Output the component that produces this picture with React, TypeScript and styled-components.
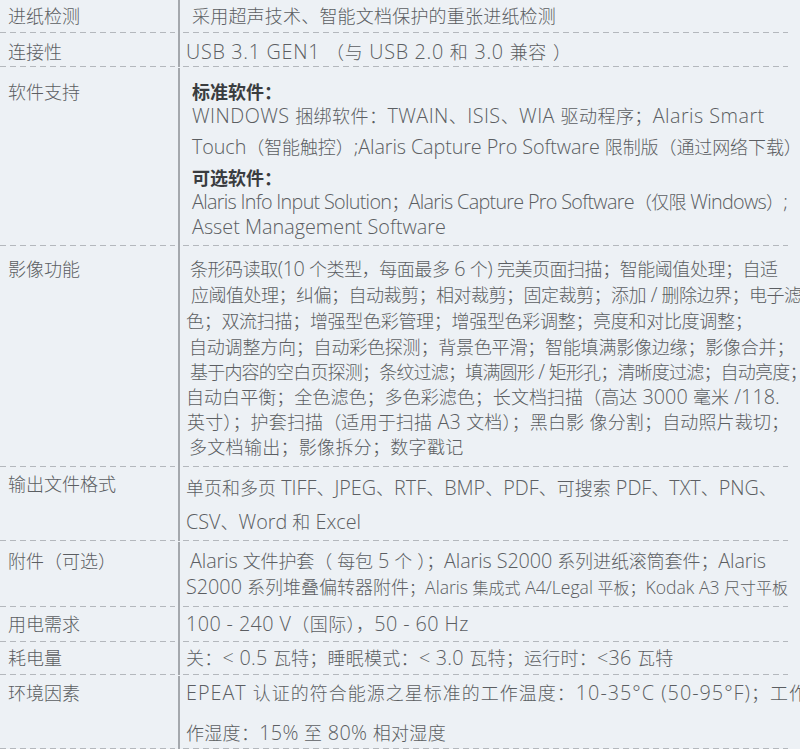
import styled, { createGlobalStyle } from 'styled-components'

const GlobalStyle = createGlobalStyle`
  html, body {
    margin: 0;
    padding: 0;
    background: #edf1f5;
    overflow: hidden;
  }
`

const dash = (color: string) =>
  `repeating-linear-gradient(to right, ${color} 0 6px, transparent 6px 10px)`

const Table = styled.div`
  display: grid;
  grid-template-columns: 180px 608px;

  width: 800px;
  height: 749px;

  font-family: 'Open Sans', 'Noto Sans CJK SC', sans-serif;
  font-size: 18px;
  font-weight: 300;
  color: #5b5e62;
`

const Label = styled.div<{ $h: number; $pt: number }>`
  box-sizing: border-box;
  height: ${({ $h }) => $h}px;
  padding: ${({ $pt }) => $pt}px 0 0 8px;

  border-right: 2px solid #a4a8ad;
  background: ${dash('#b4b8bd')} left bottom / calc(100% - 3px) 1px no-repeat;

  line-height: 26px;
  white-space: nowrap;
`

const Value = styled.div<{ $h: number; $pt: number }>`
  box-sizing: border-box;
  height: ${({ $h }) => $h}px;
  padding: ${({ $pt }) => $pt}px 0 0 6px;

  background: ${dash('#b4b8bd')} right bottom / calc(100% - 3px) 1px no-repeat;

  display: flex;
  flex-direction: column;
`

const Line = styled.div<{ $gap?: number; $lh?: number; $in?: number; $ls?: number }>`
  margin-top: ${({ $gap = 0 }) => $gap}px;
  padding-left: ${({ $in = 0 }) => $in}px;

  line-height: ${({ $lh = 26 }) => $lh}px;
  letter-spacing: ${({ $ls = 0 }) => $ls}px;
  white-space: nowrap;
`

const Heading = styled(Line)`
  font-family: 'Noto Sans CJK SC', sans-serif;
  font-weight: 700;
  color: #3a3c3f;
`

// latin runs are set a size up from the CJK text, as in print
const Latin = styled.span`
  font-size: 1.1em;
`

const Small = styled.span`
  font-size: 16px;
`

const LATIN = /([\x20-\x7E°]+)/

const mixed = (text: string) =>
  text
    .split(LATIN)
    .map((part, i) => (i % 2 === 1 ? <Latin key={i}>{part}</Latin> : part))

type LineSpec = {
  text: string
  tail?: string
  heading?: boolean
  gap?: number
  lh?: number
  indent?: number
  ls?: number
}

type Spec = {
  label: string
  h: number
  pt: number
  lines: LineSpec[]
}

const specs: Spec[] = [
  {
    label: '进纸检测',
    h: 33,
    pt: 3,
    lines: [{ text: '采用超声技术、智能文档保护的重张进纸检测', indent: 6, ls: 0.2 }],
  },
  {
    label: '连接性',
    h: 34,
    pt: 6,
    lines: [{ text: 'USB 3.1 GEN1 （与 USB 2.0 和 3.0 兼容 ）', ls: 0.7 }],
  },
  {
    label: '软件支持',
    h: 178,
    pt: 11,
    lines: [
      { text: '标准软件：', heading: true, indent: 6, lh: 24 },
      { text: 'WINDOWS 捆绑软件：TWAIN、ISIS、WIA 驱动程序；Alaris Smart', indent: 6, ls: 0.45 },
      { text: 'Touch（智能触控）;Alaris Capture Pro Software 限制版（通过网络下载）', gap: 5, indent: 6, ls: -0.1 },
      { text: '可选软件：', heading: true, gap: 5, indent: 6, lh: 24 },
      { text: 'Alaris Info Input Solution；Alaris Capture Pro Software（仅限 Windows）;', indent: 6, ls: -0.7 },
      { text: 'Asset Management Software', gap: -1, indent: 6 },
    ],
  },
  {
    label: '影像功能',
    h: 221,
    pt: 10,
    lines: [
      { text: '条形码读取(10 个类型，每面最多 6 个) 完美页面扫描；智能阈值处理；自适', indent: 4, ls: -0.45 },
      { text: '应阈值处理；纠偏；自动裁剪；相对裁剪；固定裁剪；添加 / 删除边界；电子滤色', indent: 5, ls: -0.5 },
      { text: '色；双流扫描；增强型色彩管理；增强型色彩调整；亮度和对比度调整；', ls: -0.3 },
      { text: '自动调整方向；自动彩色探测；背景色平滑；智能填满影像边缘；影像合并；', indent: 3, ls: -0.2 },
      { text: '基于内容的空白页探测；条纹过滤；填满圆形 / 矩形孔；清晰度过滤；自动亮度；', gap: -1, indent: 4, ls: -0.8 },
      { text: '自动白平衡；全色滤色；多色彩滤色；长文档扫描（高达 3000 毫米 /118.', gap: -1, ls: 0.05 },
      { text: '英寸）；护套扫描（适用于扫描 A3 文档）；黑白影 像分割；自动照片裁切；', gap: -1, indent: 1, ls: 0.15 },
      { text: '多文档输出；影像拆分；数字戳记', gap: -1, indent: 3, ls: 0.3 },
    ],
  },
  {
    label: '输出文件格式',
    h: 74,
    pt: 4,
    lines: [
      { text: '单页和多页 TIFF、JPEG、RTF、BMP、PDF、可搜索 PDF、TXT、PNG、', lh: 34 },
      { text: 'CSV、Word 和 Excel', lh: 34 },
    ],
  },
  {
    label: '附件（可选）',
    h: 65,
    pt: 6,
    lines: [
      { text: 'Alaris 文件护套（ 每包 5 个 ）；Alaris S2000 系列进纸滚筒套件；Alaris', indent: 4, ls: -0.1 },
      { text: 'S2000 系列堆叠偏转器附件', tail: '；Alaris 集成式 A4/Legal 平板；Kodak A3 尺寸平板' },
    ],
  },
  {
    label: '用电需求',
    h: 35,
    pt: 4,
    lines: [{ text: '100 - 240 V（国际），50 - 60 Hz', ls: 0.4 }],
  },
  {
    label: '耗电量',
    h: 33,
    pt: 3,
    lines: [{ text: '关：< 0.5 瓦特；睡眠模式：< 3.0 瓦特；运行时：<36 瓦特', ls: 0.25 }],
  },
  {
    label: '环境因素',
    h: 73,
    pt: 4,
    lines: [
      { text: 'EPEAT 认证的符合能源之星标准的工作温度：10-35°C (50-95°F)；工作', ls: 1 },
      { text: '作湿度：15% 至 80% 相对湿度', gap: 14, ls: 0.3 },
    ],
  },
]

const SpecLine = ({ line }: { line: LineSpec }) => {
  const Tag = line.heading ? Heading : Line
  return (
    <Tag $gap={line.gap} $lh={line.lh} $in={line.indent} $ls={line.ls}>
      {line.heading ? line.text : mixed(line.text)}
      {line.tail && <Small>{mixed(line.tail)}</Small>}
    </Tag>
  )
}

const App = () => (
  <>
    <GlobalStyle />
    <Table>
      {specs.flatMap(spec => [
        <Label key={`${spec.label}-l`} $h={spec.h} $pt={spec.pt}>
          {spec.label}
        </Label>,
        <Value key={`${spec.label}-v`} $h={spec.h} $pt={spec.pt}>
          {spec.lines.map((line, i) => (
            <SpecLine key={i} line={line} />
          ))}
        </Value>,
      ])}
    </Table>
  </>
)

export default App
